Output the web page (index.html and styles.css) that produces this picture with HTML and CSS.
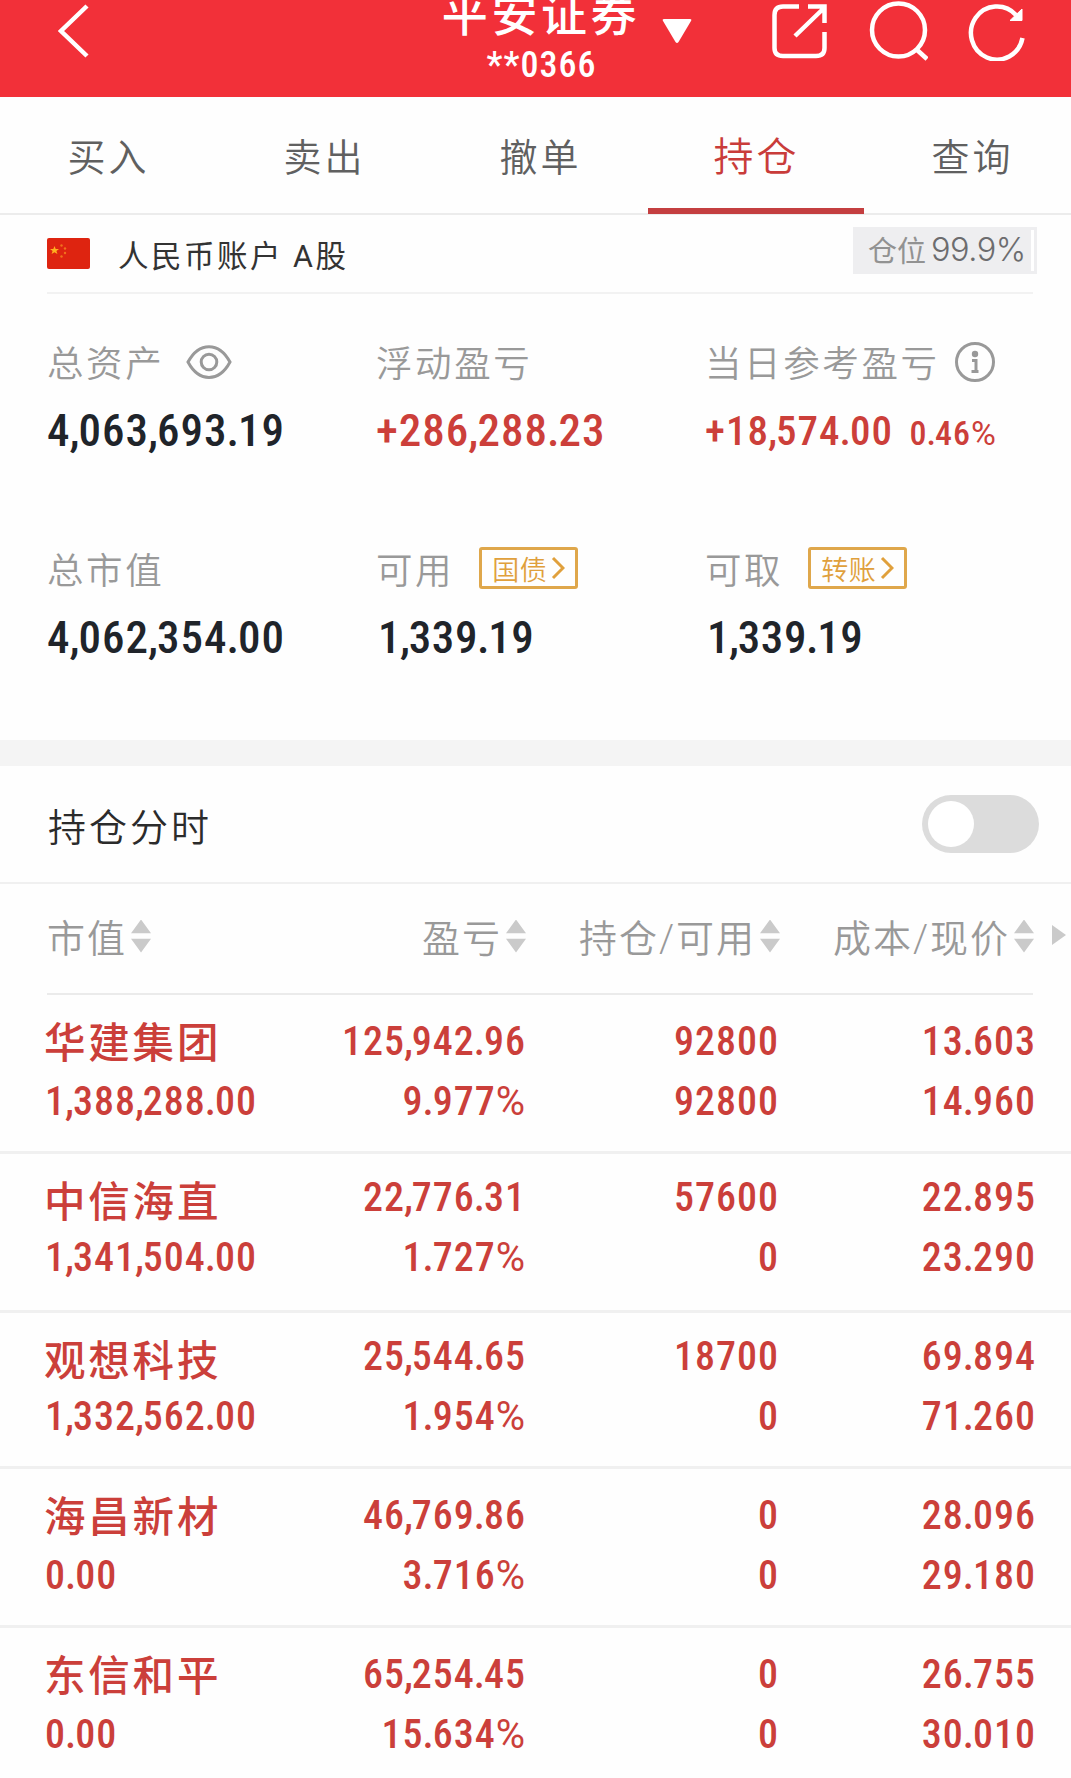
FILE: index.html
```html
<!DOCTYPE html>
<html lang="zh-CN">
<head>
    <meta charset="UTF-8">
    <meta name="viewport" content="width=device-width, initial-scale=1.0">
    <title>平安证券 持仓</title>
    <link rel="stylesheet" href="styles.css">
</head>
<body>
    <header class="topbar">
        <svg class="back" viewBox="0 0 32 54"><path d="M29 2L3 27L29 52"/></svg>
        <div class="broker">
            <div class="broker-name">平安证券</div>
            <div class="broker-no">**0366</div>
        </div>
        <svg class="caret" viewBox="0 0 30 26"><path d="M2 1H28Q30 1 29 3L16.500 24Q15 26 13.500 24L1 3Q0 1 2 1Z"/></svg>
        <div class="actions">
            <svg viewBox="0 0 60 60"><path d="M29 5.500H13Q4.500 5.500 4.500 14V47Q4.500 55 13 55H46Q54.500 55 54.500 47V31M25 35L53 8M38 5.500H54.500V22"/></svg>
            <svg viewBox="0 0 60 60"><ellipse cx="30.500" cy="29" rx="26.500" ry="26.500"/><path d="M48 48L59 58"/></svg>
            <svg viewBox="0 0 60 60"><path d="M56.500 37A26 26.500 0 1 1 50 14"/><path class="solid" d="M56 8V19.500H44Z"/></svg>
        </div>
    </header>

    <nav class="tabs">
        <a>买入</a>
        <a>卖出</a>
        <a>撤单</a>
        <a class="active">持仓</a>
        <a>查询</a>
    </nav>

    <section class="account">
        <svg class="flag" viewBox="0 0 43 31">
            <rect width="43" height="31" rx="2" fill="#de2410"/>
            <path d="M7.500 8L8.700 11H12L9.400 13L10.400 16L7.500 14.200L4.600 16L5.600 13L3 11H6.300Z" fill="#ffb01f"/>
            <g fill="#f0721c"><circle cx="14.500" cy="7.500" r="1.200"/><circle cx="18" cy="10.500" r="1.200"/><circle cx="18" cy="15" r="1.200"/><circle cx="14.500" cy="18.500" r="1.200"/></g>
        </svg>
        <span class="account-name">人民币账户 A股</span>
        <span class="position">仓位<b>99.9%</b></span>
    </section>

    <section class="summary">
        <div class="item">
            <div class="label">总资产
                <svg class="eye" viewBox="0 0 46 34"><path d="M2 17C13 -3.500 33 -3.500 44 17C33 37.500 13 37.500 2 17Z"/><circle cx="23" cy="17" r="7.800"/></svg>
            </div>
            <div class="num">4,063,693.19</div>
        </div>
        <div class="item">
            <div class="label">浮动盈亏</div>
            <div class="num red">+286,288.23</div>
        </div>
        <div class="item">
            <div class="label">当日参考盈亏
                <svg class="info" viewBox="0 0 40 40"><circle cx="20" cy="20" r="18.500"/><circle class="dot" cx="20" cy="12" r="3.200"/><path d="M17 18.500H21V29M16.500 29.500H23.500"/></svg>
            </div>
            <div class="num red day">+18,574.00 <small>0.46%</small></div>
        </div>
        <div class="item">
            <div class="label">总市值</div>
            <div class="num">4,062,354.00</div>
        </div>
        <div class="item">
            <div class="label">可用
                <span class="link">国债<svg viewBox="0 0 14 24"><path d="M2 2L12 12L2 22"/></svg></span>
            </div>
            <div class="num one">1,339.19</div>
        </div>
        <div class="item">
            <div class="label">可取
                <span class="link">转账<svg viewBox="0 0 14 24"><path d="M2 2L12 12L2 22"/></svg></span>
            </div>
            <div class="num one">1,339.19</div>
        </div>
    </section>

    <section class="switch-row">
        <span>持仓分时</span>
        <div class="switch"></div>
    </section>

    <section class="grid head">
        <div>市值<i class="sort"></i></div>
        <div>盈亏<i class="sort"></i></div>
        <div>持仓/可用<i class="sort"></i></div>
        <div>成本/现价<i class="sort"></i></div>
        <div class="more"></div>
    </section>

    <section class="list">
        <div class="grid row">
            <div><h3>华建集团</h3><p>1,388,288.00</p></div>
            <div><p>125,942.96</p><p>9.977%</p></div>
            <div><p>92800</p><p>92800</p></div>
            <div><p>13.603</p><p>14.960</p></div>
        </div>
        <div class="grid row">
            <div><h3>中信海直</h3><p>1,341,504.00</p></div>
            <div><p>22,776.31</p><p>1.727%</p></div>
            <div><p>57600</p><p>0</p></div>
            <div><p>22.895</p><p>23.290</p></div>
        </div>
        <div class="grid row">
            <div><h3>观想科技</h3><p>1,332,562.00</p></div>
            <div><p>25,544.65</p><p>1.954%</p></div>
            <div><p>18700</p><p>0</p></div>
            <div><p>69.894</p><p>71.260</p></div>
        </div>
        <div class="grid row">
            <div><h3>海昌新材</h3><p>0.00</p></div>
            <div><p>46,769.86</p><p>3.716%</p></div>
            <div><p>0</p><p>0</p></div>
            <div><p>28.096</p><p>29.180</p></div>
        </div>
        <div class="grid row">
            <div><h3>东信和平</h3><p>0.00</p></div>
            <div><p>65,254.45</p><p>15.634%</p></div>
            <div><p>0</p><p>0</p></div>
            <div><p>26.755</p><p>30.010</p></div>
        </div>
    </section>

    <script>
        // tighten commas and points inside the figures, widen the percent sign
        document.querySelectorAll(".num, .row p").forEach(el => {
            el.innerHTML = el.innerHTML
                .replace(/[.,](?=\d)/g, '<span class="pt">$&</span>')
                .replace("%", '<span class="pct">%</span>');
        });
    </script>
</body>
</html>
```
FILE: styles.css
```css
* { box-sizing: border-box; }
body { margin: 0; width: 1071px; height: 1778px; overflow: hidden; background: #fefefe; color: #2b2b2b; font-family: Roboto, "Noto Sans CJK SC", sans-serif; }
svg { fill: none; flex: none; }
h3, p { margin: 0; }

/* top bar */
.topbar { height: 97px; background: #f23039; color: #fff; display: flex; overflow: hidden; }
.topbar svg { stroke: #fff; stroke-width: 4.5; }
.back { width: 32px; height: 54px; margin: 4px 0 0 58px; }
.broker { width: 200px; margin-left: 351px; text-align: center; }
.broker-name { font-size: 46px; font-weight: 500; letter-spacing: 3.6px; line-height: 60px; margin-top: -15px; white-space: nowrap; }
.broker-no { font-size: 36px; font-weight: 500; font-stretch: 85%; letter-spacing: 1px; line-height: 40px; padding-left: 1px; }
.topbar .caret { width: 30px; height: 26px; margin: 18px 0 0 21px; fill: #fff; stroke: none; }
.actions { display: flex; gap: 38px; margin: 1px 0 0 78px; }
.actions svg { width: 60px; height: 60px; }
.topbar .solid { fill: #fff; stroke-width: 1; }

/* tabs */
.tabs { display: grid; grid-template-columns: repeat(5, 216px); height: 118px; border-bottom: 2px solid #ececec; }
.tabs a { height: 117px; padding: 33px 0 0 1px; text-align: center; font-size: 38px; line-height: 56px; letter-spacing: 3px; color: #606060; font-weight: 350; }
.tabs a.active { font-size: 40px; color: #c93c3a; border-bottom: 6px solid #c43f40; }

/* account */
.account { display: flex; align-items: center; height: 79px; margin: 0 38px 0 47px; padding-bottom: 2px; background: linear-gradient(#f2f2f2, #f2f2f2) 0 77px / 986px 2px no-repeat; }
.flag { width: 43px; height: 31px; }
.account-name { margin: 0 0 0 28px; font-size: 30.5px; letter-spacing: 2.5px; color: #333; }
.position { display: flex; align-items: center; width: 184px; height: 47px; margin: -6px -4px 0 auto; padding: 0 0 4px 15px; background: linear-gradient(#fff, #fff) 178px 3px / 3px 41px no-repeat #eeeef0; font-size: 29px; color: #929292; }
.position b { margin: 2px 0 0 5px; font-family: Inter; font-weight: 300; font-size: 32.5px; letter-spacing: -0.5px; color: #6c6c6e; }

/* summary */
.summary { display: grid; grid-template-columns: 329px 329px 1fr; grid-template-rows: 207px 206px; height: 446px; padding: 39px 0 0 47px; }
.label { display: flex; align-items: center; height: 56px; font-size: 36.500px; letter-spacing: 2.6px; color: #999; font-weight: 350; white-space: nowrap; }
.label svg { stroke: #999; stroke-width: 3; }
.eye { width: 46px; height: 34px; margin: 1px 0 0 22px; }
.info { width: 40px; height: 40px; margin: 1px 0 0 15px; }
.info .dot { fill: #999; stroke: none; }
.num { font-size: 45px; font-weight: 500; font-stretch: 85%; letter-spacing: 1px; line-height: 60px; margin-top: 12px; color: #20242a; white-space: nowrap; }
.num.one { padding-left: 2px; letter-spacing: 0.6px; }
.num.red { color: #cc3f3a; }
.num.day { font-size: 41px; }
.num small { font-size: 34px; margin-left: 6px; }
.pt { margin-right: -2px; margin-left: -1px; }
.pct { font-stretch: 100%; font-weight: 400; }
.link { display: flex; align-items: center; justify-content: center; width: 99px; height: 42px; margin-left: 25px; border: 3px solid #dfa74b; border-radius: 3px; color: #e0a03c; font-size: 27px; letter-spacing: 0.5px; }
.label .link svg { width: 14px; height: 24px; margin-left: 4px; stroke: #e0a03c; }

/* switch */
.switch-row { display: flex; align-items: center; justify-content: space-between; height: 144px; padding: 0 32px 0 48px; border-top: 26px solid #f4f4f4; border-bottom: 2px solid #f0f0f0; font-size: 38px; font-weight: 350; letter-spacing: 3px; }
.switch { width: 117px; height: 58px; padding: 6px; border-radius: 29px; background: #dcdcdc; }
.switch::before { content: ""; display: block; width: 46px; height: 46px; border-radius: 50%; background: #fff; }

/* holdings */
.grid { display: grid; grid-template-columns: 200px 278px 253px 257px 37px; padding-left: 46px; }
.grid > div { text-align: right; white-space: nowrap; }
.grid > div:first-child { text-align: left; }
.head { height: 111px; padding-bottom: 9px; align-items: center; font-size: 38px; letter-spacing: 2px; color: #999; font-weight: 350; background: linear-gradient(#ebebeb, #ebebeb) 47px 109px / 986px 2px no-repeat; }
.head > div { display: flex; align-items: center; justify-content: flex-end; }
.head > div:first-child { justify-content: flex-start; padding-left: 1px; }
.head > div:nth-child(2) { margin-right: -2px; }
.head > div:nth-child(3) { margin-right: -3px; }
.sort { width: 20px; height: 33px; margin: 2px 0 0 4px; background: #cacaca; clip-path: polygon(50% 0, 100% 42%, 0 42%, 0 58%, 100% 58%, 50% 100%, 0 58%, 0 42%); }
.head .more { width: 14px; height: 20px; margin-left: 18px; background: #cacaca; clip-path: polygon(0 0, 100% 50%, 0 100%); }
.row { height: 159px; padding-top: 17px; border-bottom: 3px solid #f0f0f0; color: #cb3f3a; font-size: 40px; font-weight: 500; font-stretch: 85%; letter-spacing: 1px; }
.row p { line-height: 60px; margin-right: -2px; }
.row > div:first-child p { margin-left: -1px; }
.row h3 { height: 60px; line-height: 64px; margin-left: -2px; font-size: 41.5px; font-weight: 500; letter-spacing: 2.8px; }
.row:nth-child(2) { padding-top: 14px; }
.row:nth-child(3) { height: 156px; padding-top: 14px; }
.row:nth-child(2) h3, .row:nth-child(3) h3 { line-height: 70px; }
.row:last-child { border: 0; }
```
